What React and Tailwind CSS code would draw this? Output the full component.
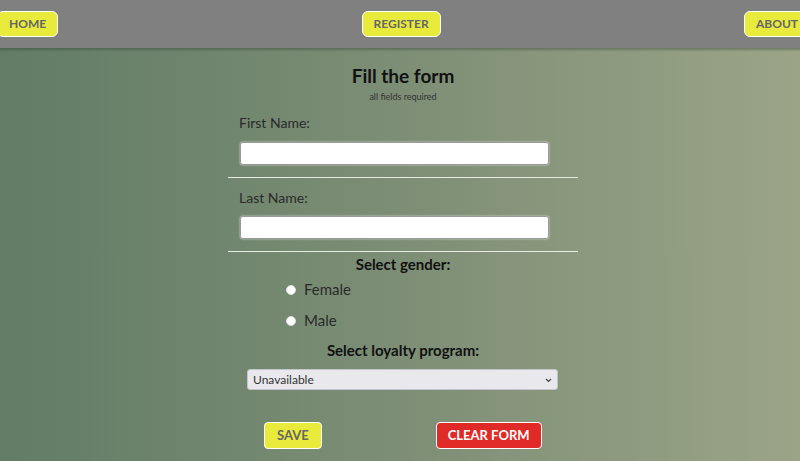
import React, { useState } from "react";

const navBtn =
  "h-[26px] px-[11px] rounded-[6px] border-[1.5px] border-white bg-[#e9eb3c] text-[#666] text-[12px] font-bold leading-none";

const App = () => {
  const [gender, setGender] = useState("");

  return (
    <div className="min-h-screen font-['Lato','Open_Sans',sans-serif] bg-[linear-gradient(to_right,#627c65_0%,#7a8c74_45%,#9ba487_100%)] text-[#222]">
      {/* Header */}
      <header className="h-[48px] bg-[#808080] flex items-center justify-between -ml-[3px] -mr-[10px] shadow-[0_2px_2px_rgba(40,60,40,0.35)]">
        <button className={navBtn}>HOME</button>
        <button className={navBtn}>REGISTER</button>
        <button className={navBtn}>ABOUT</button>
      </header>

      {/* Form */}
      <div className="flex justify-center pl-[6px]">
        <form className="w-[350px] flex flex-col" onSubmit={(e) => e.preventDefault()}>
          <h1 className="mt-[16px] text-center text-[19px] leading-[24px] font-bold text-[#111]">Fill the form</h1>
          <p className="mt-[3px] text-center text-[9px] leading-[11px] text-[#333]">all fields required</p>

          <label className="mt-[12px] pl-[11px] text-[14px] leading-[17px] text-[#2a2a2a]">First Name:</label>
          <input
            type="text"
            className="mt-[11px] ml-[12px] w-[309px] h-[23px] bg-white rounded-[3px] border border-[#999] shadow-[0_0_2px_rgba(255,255,255,0.8)]"
          />
          <hr className="mt-[12px] border-t-[1.5px] border-[#e6ece0]" />

          <label className="mt-[11px] pl-[11px] text-[14px] leading-[17px] text-[#2a2a2a]">Last Name:</label>
          <input
            type="text"
            className="mt-[10px] ml-[12px] w-[309px] h-[23px] bg-white rounded-[3px] border border-[#999] shadow-[0_0_2px_rgba(255,255,255,0.8)]"
          />
          <hr className="mt-[12px] border-t-[1.5px] border-[#e6ece0]" />

          <p className="mt-[3px] text-center text-[15px] leading-[18px] font-bold text-[#111]">Select gender:</p>
          <div className="mt-[7px] pl-[58px] flex flex-col gap-[12px]">
            {["Female", "Male"].map((g) => (
              <label key={g} className="flex items-center gap-[8px] text-[15px] leading-[19px] text-[#2a2a2a]">
                <input
                  type="radio"
                  name="gender"
                  checked={gender === g}
                  onChange={() => setGender(g)}
                  className="appearance-none w-[10px] h-[10px] rounded-full bg-white border border-[#ddd] checked:bg-blue-600"
                />
                {g}
              </label>
            ))}
          </div>

          <p className="mt-[11px] text-center text-[15px] leading-[18px] font-bold text-[#111]">Select loyalty program:</p>
          <div className="relative flex mt-[10px] ml-[19px] w-[311px] h-[21px]">
            <select className="block appearance-none w-full h-[21px] pl-[5px] rounded-[3px] bg-[#e9e9ed] border border-[#c4c4cc] text-[12px] leading-[19px] text-[#333]">
              <option>Unavailable</option>
            </select>
            {/* small chevron */}
            <svg className="absolute right-[6px] top-[9px] pointer-events-none" width="7" height="5" viewBox="0 0 7 5">
              <path d="M1 1l2.5 2.5L6 1" fill="none" stroke="#444" strokeWidth="1.2" />
            </svg>
          </div>

          <div className="mt-[32px] flex items-center pl-[36px]">
            <button className="h-[27px] px-[12px] rounded-[4px] border border-white bg-[#e9eb3c] text-[#666] text-[13px] font-bold">
              SAVE
            </button>
            <button
              type="reset"
              className="ml-[114px] h-[27px] px-[11px] rounded-[4px] border border-white bg-[#e02a28] text-white text-[13px] font-bold"
            >
              CLEAR FORM
            </button>
          </div>
        </form>
      </div>
    </div>
  );
};

export default App;
